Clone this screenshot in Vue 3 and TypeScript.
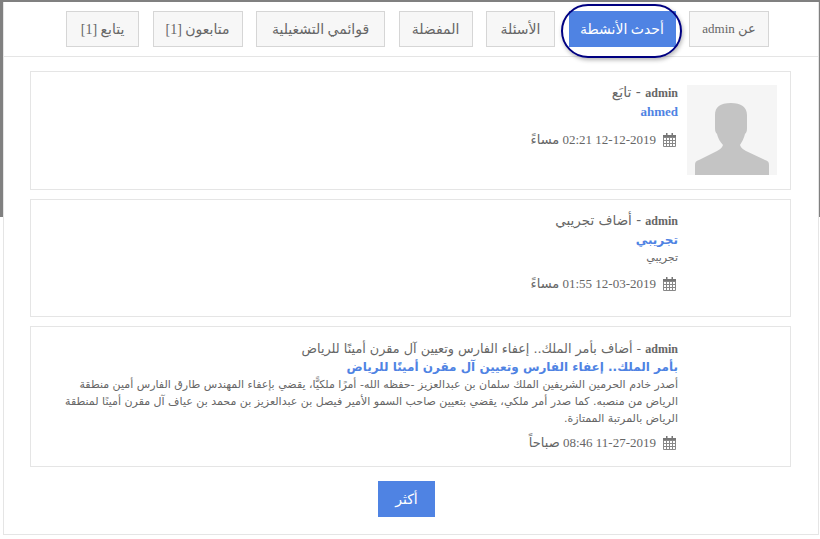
<script setup lang="ts">
interface Item {
  action: string
  link: string
  linkClass?: string
  desc?: string[]
  date: string
  avatar?: boolean
  cls: string
}
const tabs = ['عن admin', 'أحدث الأنشطة', 'الأسئلة', 'المفضلة', 'قوائمي التشغيلية', 'متابعون [1]', 'يتابع [1]']
const items: Item[] = [
  { action: 'تابَع', link: 'ahmed', linkClass: 'latin', date: '12-12-2019 02:21 مساءً', avatar: true, cls: 'c1' },
  { action: 'أضاف تجريبي', link: 'تجريبي', desc: ['تجريبي'], date: '12-03-2019 01:55 مساءً', cls: 'c2' },
  {
    action: 'أضاف بأمر الملك.. إعفاء الفارس وتعيين آل مقرن أمينًا للرياض',
    link: 'بأمر الملك.. إعفاء الفارس وتعيين آل مقرن أمينًا للرياض',
    desc: [
      'أصدر خادم الحرمين الشريفين الملك سلمان بن عبدالعزيز -حفظه الله- أمرًا ملكيًّا، يقضي بإعفاء المهندس طارق الفارس أمين منطقة',
      'الرياض من منصبه. كما صدر أمر ملكي، يقضي بتعيين صاحب السمو الأمير فيصل بن عبدالعزيز بن محمد بن عياف آل مقرن أمينًا لمنطقة',
      'الرياض بالمرتبة الممتازة.'
    ],
    date: '11-27-2019 08:46 صباحاً',
    cls: 'c3'
  }
]
</script>

<template>
  <div class="modal" dir="rtl">
    <nav class="tabs">
      <button v-for="(t, i) in tabs" :key="t" class="tab" :class="{ active: i === 1 }">{{ t }}</button>
    </nav>
    <main class="list">
      <article v-for="it in items" :key="it.date" class="card" :class="it.cls">
        <svg v-if="it.avatar" class="avatar" viewBox="0 0 90 90">
          <rect width="90" height="90" fill="#f5f5f5" />
          <path d="M8 90V80C8 77 9 76 12 75L30 66C33 64 35 63 36 60C33 57 31 53 30 49C28 47 28 45 28 42V30C28 22 33 18 44 18C54 18 60 22 60 30V42C60 45 60 47 58 49C57 53 55 57 53 60C54 63 56 64 59 66L78 75C81 76 82 77 82 80V90Z" fill="#c4c4c4" />
        </svg>
        <div class="body">
          <div class="title"><b class="user">admin</b> - {{ it.action }}</div>
          <a class="link" :class="it.linkClass">{{ it.link }}</a>
          <p v-for="d in it.desc" :key="d" class="desc">{{ d }}</p>
          <div class="date">
            <svg class="cal" viewBox="0 0 13 14">
              <path d="M3 0h1.500v2H3zM8.500 0H10v2H8.500z" fill="#777" />
              <path d="M0 2h13v3H0z" fill="#777" />
              <path d="M.5 4.500h12v9H.5zM.5 7.500h12M.5 10.500h12M3.500 5v8M6.500 5v8M9.500 5v8" fill="none" stroke="#888" />
            </svg>
            <span class="when">{{ it.date }}</span>
          </div>
        </div>
      </article>
    </main>
    <div class="more-row"><button class="more">أكثر</button></div>
  </div>
</template>

<style>
html, body {
  margin: 0;
  height: 539px;
  overflow: hidden;
  background: linear-gradient(#808080 217px, #fff 217px);
}
</style>

<style scoped>
.modal {
  box-sizing: border-box;
  margin: 2px 1px 0 3px;
  height: 533px;
  background: #fff;
  border: 1px solid #e5e5e5;
  border-top: 0;
  font-family: "DejaVu Sans", sans-serif;
  color: #666;
}
.tabs {
  display: flex;
  justify-content: center;
  gap: 13.5px;
  height: 55px;
  padding-top: 9px;
  padding-left: 13px;
  box-sizing: border-box;
  border-bottom: 1px solid #e5e5e5;
}
.tab {
  position: relative;
  box-sizing: border-box;
  height: 36px;
  padding: 0;
  margin: 0;
  border: 1px solid #d6d6d6;
  background: #f7f7f7;
  color: #666;
  font: 14px "Liberation Serif", "DejaVu Sans", serif;
}
.tab:nth-child(1) { width: 80px; font-size: 13px; }
.tab:nth-child(2) { width: 107px; }
.tab:nth-child(3) { width: 69px; }
.tab:nth-child(4) { width: 74px; }
.tab:nth-child(5) { width: 129px; }
.tab:nth-child(6) { width: 90px; }
.tab:nth-child(7) { width: 73px; }
.tab.active {
  background: #4f83e3;
  border-color: #4f83e3;
  color: #fff;
}
.tab.active::after {
  content: "";
  position: absolute;
  inset: -8px -7px -12px -9px;
  border: 2px solid #000080;
  border-radius: 29px;
  box-shadow: 1px 2px 4px rgba(0, 0, 0, 0.3);
}
.list {
  display: flex;
  flex-direction: column;
  gap: 9px;
  padding: 14px 27px 0 26px;
}
.card {
  display: flex;
  gap: 9px;
  box-sizing: border-box;
  border: 1px solid #e5e5e5;
  padding: 13px 13px 0;
}
.c1 { height: 119px; }
.c2 { height: 118px; }
.c3 { height: 141px; }
.avatar { width: 90px; height: 90px; flex: none; }
.body { flex: 1; min-width: 0; margin-top: -2px; }
.c2 .body, .c3 .body { padding-right: 99px; }
.c3 .body { margin-top: 0; }
.title {
  font-size: 14px;
  line-height: 18px;
  color: #666;
}
.c2 .title { font-size: 13.5px; }
.c3 .title { font-size: 12.8px; }
.user {
  font: bold 12px "Liberation Serif", serif;
}
.link {
  display: block;
  font-size: 12px;
  font-weight: bold;
  line-height: 18px;
  color: #4f83e3;
}
.link.latin { font: bold 13px/18px "Liberation Serif", serif; margin-top: 2px; }
.c2 .link { line-height: 20px; margin-top: 1px; }
.desc {
  margin: 0;
  font-size: 11px;
  line-height: 17px;
  color: #666;
  white-space: nowrap;
}
.c2 .desc { margin-top: -1px; }
.date {
  display: flex;
  align-items: center;
  gap: 7px;
  margin-top: 10px;
  height: 18px;
  padding-right: 2px;
}
.c2 .date { margin-top: 9px; }
.c3 .date { margin-top: 7px; }
.cal { width: 13px; height: 14px; flex: none; }
.when {
  font: 13px "Liberation Serif", "DejaVu Sans", serif;
  color: #666;
}
.more-row {
  display: flex;
  justify-content: center;
  padding-top: 14px;
  padding-right: 9px;
}
.more {
  width: 57px;
  height: 36px;
  border: 0;
  padding: 0;
  background: #4f83e3;
  color: #fff;
  font: 14px "DejaVu Sans", sans-serif;
}
</style>
